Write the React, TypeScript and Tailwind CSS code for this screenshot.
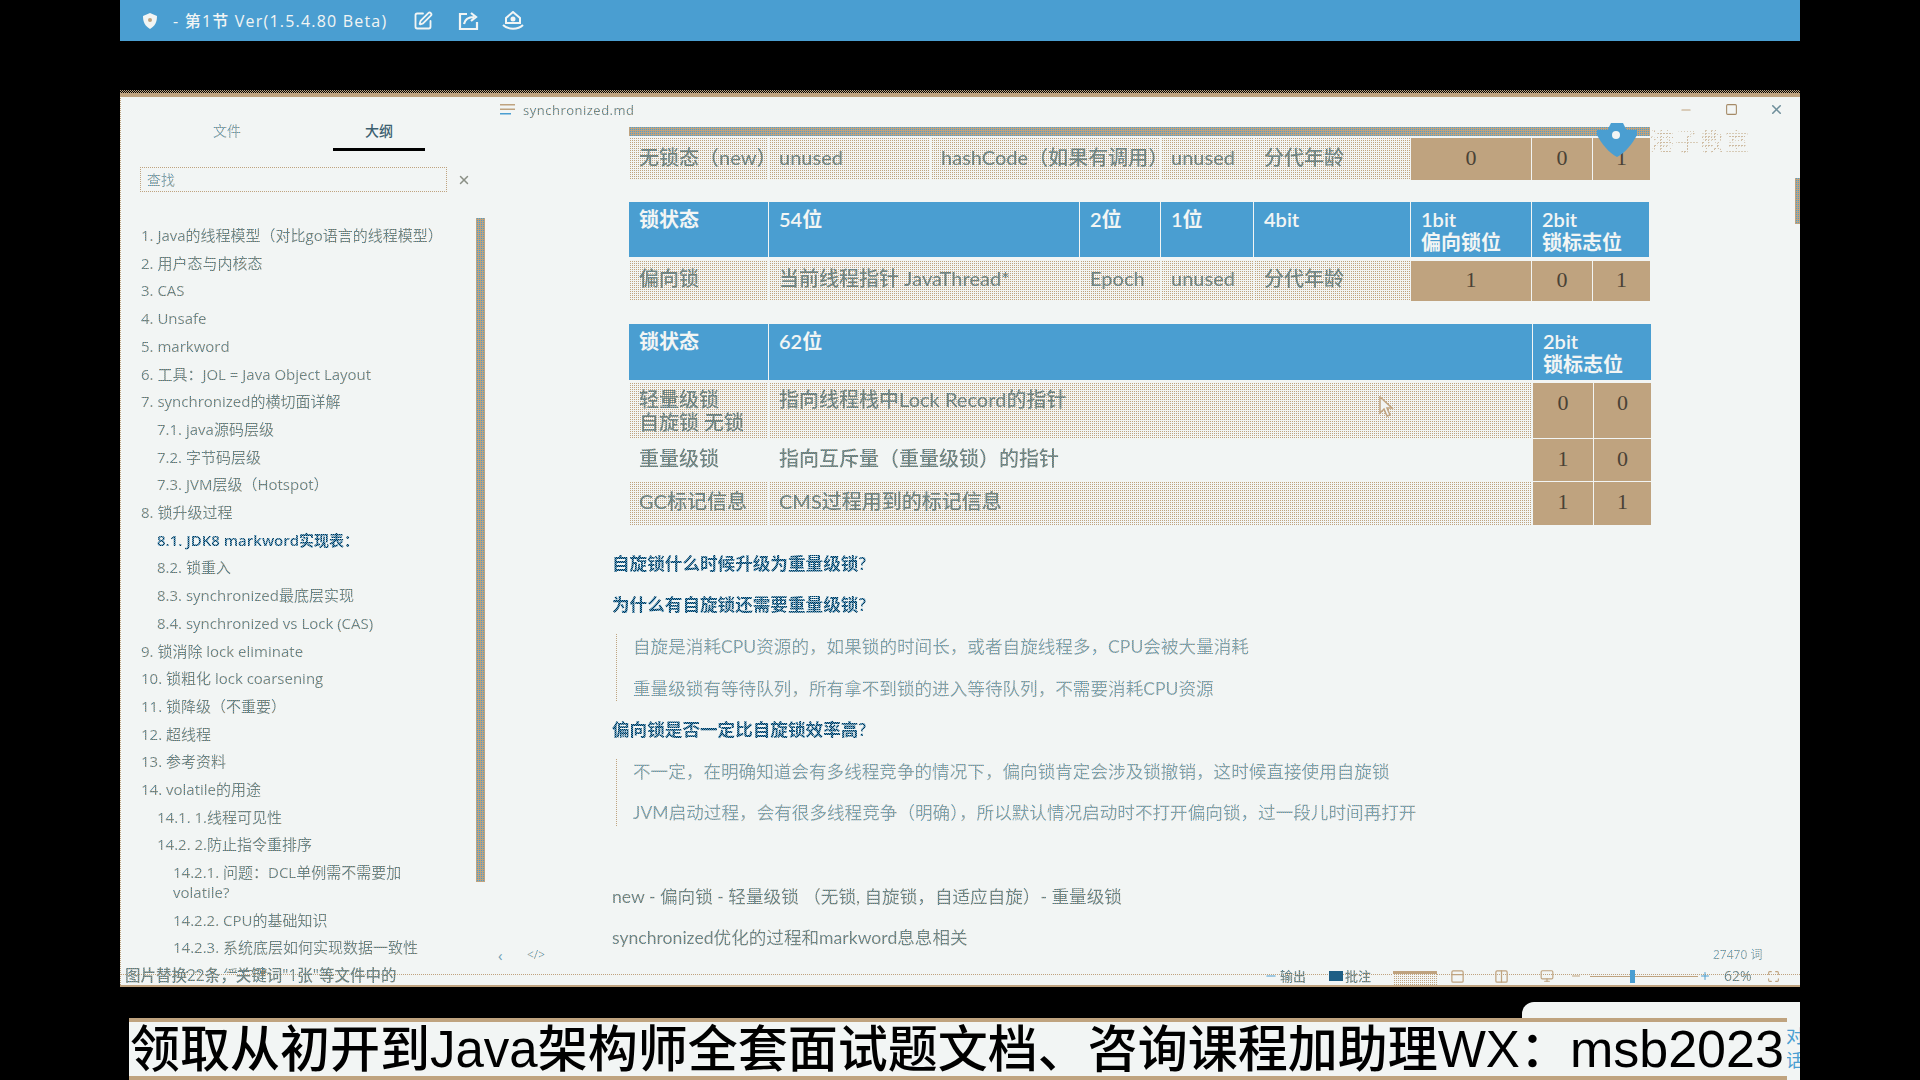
import { Maximize, Minus, Monitor, PanelTop, Plus, Square, SquarePen, X, Columns2 } from "lucide-react";

// dithered text, the reference is a low colour gif
const soft = "bg-[repeating-conic-gradient(#4a9ed1_0_25%,#bfa37f_0_50%)] bg-[length:2px_2px] bg-clip-text text-transparent";
const firm = "bg-[repeating-conic-gradient(#3f7f9f_0_25%,#a58a66_0_50%)] bg-[length:2px_2px] bg-clip-text text-transparent";
const dark = "bg-[repeating-conic-gradient(#0f2f42_0_25%,#4a9ed1_0_50%)] bg-[length:2px_2px] bg-clip-text text-transparent";
const dots = "bg-[conic-gradient(#bfa37f_25%,#f2f5f4_0)] bg-[length:2px_2px]";
const bar = "bg-[conic-gradient(#4a9ed1_25%,#bfa37f_0)] bg-[length:2px_2px]";

const outline: [number, string][] = [
  [0, "1. Java的线程模型（对比go语言的线程模型）"],
  [0, "2. 用户态与内核态"],
  [0, "3. CAS"],
  [0, "4. Unsafe"],
  [0, "5. markword"],
  [0, "6. 工具：JOL = Java Object Layout"],
  [0, "7. synchronized的横切面详解"],
  [1, "7.1. java源码层级"],
  [1, "7.2. 字节码层级"],
  [1, "7.3. JVM层级（Hotspot）"],
  [0, "8. 锁升级过程"],
  [1, "8.1. JDK8 markword实现表："],
  [1, "8.2. 锁重入"],
  [1, "8.3. synchronized最底层实现"],
  [1, "8.4. synchronized vs Lock (CAS)"],
  [0, "9. 锁消除 lock eliminate"],
  [0, "10. 锁粗化 lock coarsening"],
  [0, "11. 锁降级（不重要）"],
  [0, "12. 超线程"],
  [0, "13. 参考资料"],
  [0, "14. volatile的用途"],
  [1, "14.1. 1.线程可见性"],
  [1, "14.2. 2.防止指令重排序"],
  [2, "14.2.1. 问题：DCL单例需不需要加volatile?"],
  [2, "14.2.2. CPU的基础知识"],
  [2, "14.2.3. 系统底层如何实现数据一致性"],
  [2, "14.2.4. 缓存锁"],
];

function Cell({ children, span = "", pt = "pt-[8px]" }: { children?: React.ReactNode; span?: string; pt?: string }) {
  return (
    <div className={`${dots} ${span} ${pt} pl-[10px]`}>
      <span className={`${firm} block w-fit font-medium whitespace-nowrap`}>{children}</span>
    </div>
  );
}

function Plain({ children, pt = "pt-[8px]" }: { children?: React.ReactNode; pt?: string }) {
  return (
    <div className={`${pt} pl-[10px]`}>
      <span className={`${firm} block w-fit font-medium whitespace-nowrap`}>{children}</span>
    </div>
  );
}

function Head({ children, span = "" }: { children?: React.ReactNode; span?: string }) {
  return <div className={`bg-[#4a9ed1] ${span} pl-[10px] pt-[6px] text-[#f2f5f4] font-semibold`}>{children}</div>;
}

function Bit({ children, span = "", pt = "pt-[8px]" }: { children?: React.ReactNode; span?: string; pt?: string }) {
  return (
    <div className={`bg-[#bfa37f] ${span} ${pt} text-center font-['Liberation_Serif',serif] text-[22px] leading-[23px] text-[#4a4236]`}>
      {children}
    </div>
  );
}

function Line({ children, className = "" }: { children?: React.ReactNode; className?: string }) {
  return (
    <div className="flex h-[41.6px] items-center">
      <span className={`${className} font-['Lato','Noto_Sans_CJK_SC',sans-serif] text-[17.6px] leading-[24px] whitespace-nowrap`}>{children}</span>
    </div>
  );
}

function StatusBar() {
  return (
    <div className="relative flex h-[14px] shrink-0 items-center border-b-2 border-[#bfa37f]">
      <div className="absolute left-0 right-0 top-[1px] border-t border-dotted border-[#bfa37f]" />
      <span className={`${firm} relative ml-[5px] -mt-[7px] text-[15.5px] leading-[17px] font-medium whitespace-nowrap`}>
        图片替换22条，关键词"1张"等文件中的
      </span>
      <div className="absolute left-[1144px] top-[-5px] flex h-[16px] items-center gap-[2px]">
        <Minus size={14} className="text-[#4a9ed1]" />
        <span className={`${firm} text-[13px] leading-[15px] font-medium`}>输出</span>
      </div>
      <div className="absolute left-[1209px] top-[-5px] flex h-[16px] items-center gap-[2px]">
        <span className="h-[10px] w-[14px] bg-[#1f5f85]" />
        <span className={`${firm} text-[13px] leading-[15px] font-medium`}>批注</span>
      </div>
      <div className={`${dots} absolute left-[1273px] top-[-2px] h-[14px] w-[44px] border-t-[3px] border-[#bfa37f]`} />
      <PanelTop size={15} className="absolute left-[1330px] top-[-4px] text-[#bfa37f]" />
      <Columns2 size={15} className="absolute left-[1374px] top-[-4px] text-[#bfa37f]" />
      <Monitor size={14} className="absolute left-[1420px] top-[-4px] text-[#bfa37f]" />
      <Minus size={12} className="absolute left-[1450px] top-[-3px] text-[#bfa37f]" />
      <div className="absolute left-[1470px] top-[3px] h-px w-[108px] bg-[#bfa37f]" />
      <div className="absolute left-[1510px] top-[-3px] h-[13px] w-[5px] bg-[#4a9ed1]" />
      <Plus size={12} className="absolute left-[1579px] top-[-3px] text-[#4a9ed1]" />
      <span className={`${firm} absolute left-[1604px] top-[-5px] text-[14px] leading-[15px] font-medium`}>62%</span>
      <Maximize size={13} className="absolute left-[1647px] top-[-3px] text-[#bfa37f]" />
    </div>
  );
}

export default function App() {
  return (
    <div className="relative flex h-[1080px] w-[1920px] flex-col overflow-hidden bg-black px-[120px] font-['Open_Sans','Noto_Sans_CJK_SC',sans-serif]">
      {/* player bar */}
      <div className="flex h-[41px] shrink-0 items-center bg-[#4a9ed1] pl-[21px] text-[#f2f5f4]">
        <svg width="18" height="18" viewBox="0 0 18 18" className="shrink-0">
          <path d="M9 1 L16 4 C16 10 14 14 9 17 C4 14 2 10 2 4 Z" fill="#f2f5f4" />
          <circle cx="9" cy="8" r="2" fill="#bfa37f" />
        </svg>
        <span className="ml-[14px] text-[16px] leading-[20px] tracking-[1.2px] whitespace-nowrap font-medium">- 第1节 Ver(1.5.4.80 Beta)</span>
        <SquarePen size={20} strokeWidth={2.2} className="ml-[26px]" />
        <svg width="21" height="20" viewBox="0 0 21 20" fill="none" stroke="currentColor" strokeWidth="2.2" className="ml-[25px]">
          <path d="M9 3 H2 V18 H19 V11" />
          <path d="M6 13 C7 8 11 6 16 6 M13 2 L18 6 L13 10" />
        </svg>
        <svg width="22" height="20" viewBox="0 0 22 20" fill="none" stroke="currentColor" strokeWidth="2" className="ml-[23px]">
          <path d="M11 1 L18 7 V12 H4 V7 Z" />
          <path d="M1 14 C6 19 16 19 21 14" />
          <circle cx="11" cy="8" r="1.5" fill="currentColor" />
        </svg>
      </div>

      {/* typora window */}
      <div className="relative mt-[49px] flex h-[897px] shrink-0 flex-col bg-[#f2f5f4]">
        <div className="h-[3px] shrink-0 bg-[repeating-conic-gradient(#000_0_25%,#bfa37f_0_50%)] bg-[length:2px_2px]" />
        <div className="h-[4px] shrink-0 bg-[#bfa37f]" />
        <div className="flex min-h-0 flex-1">
          {/* sidebar */}
          <div className="relative flex w-[370px] shrink-0 flex-col overflow-hidden">
            <div className="flex h-[54px] shrink-0 pl-[61px]">
              <div className={`${soft} h-fit w-[92px] pt-[24px] text-center text-[14px] leading-[20px]`}>文件</div>
              <div className="ml-[60px] w-[92px] border-b-[3px] border-[#000] pt-[24px] text-center text-[14px] leading-[20px] font-medium text-[#3d5f70]">大纲</div>
            </div>
            <div className="ml-[20px] mt-[16px] flex items-center">
              <div className="flex h-[25px] w-[307px] items-center border border-dotted border-[#bfa37f] pl-[6px]">
                <span className={`${soft} text-[14px] leading-[18px]`}>查找</span>
              </div>
              <X size={14} strokeWidth={2.5} className="ml-[10px] text-[#8a8f85]" />
            </div>
            <div className="mt-[30px] w-[320px] shrink-0 pl-[21px]">
              {outline.map(([level, title]) => (
                <div
                  key={title}
                  className={`py-[4px] text-[15px] leading-[19.7px] ${level === 1 ? "ml-[16px]" : level === 2 ? "ml-[32px]" : ""} ${
                    title.startsWith("8.1.") ? `${dark} w-fit font-semibold` : `${firm} w-fit`
                  }`}
                >
                  {title}
                </div>
              ))}
            </div>
            <div className={`${bar} absolute left-[356px] top-[121px] h-[664px] w-[9px]`} />
          </div>

          {/* editor */}
          <div className="relative flex min-w-0 flex-1 flex-col overflow-hidden">
            <div className="flex h-[30px] shrink-0 items-center pb-[5px] pl-[10px] pr-[16px]">
              <svg width="15" height="11" viewBox="0 0 15 11" className="shrink-0">
                <rect x="0" y="0" width="15" height="1.5" fill="#bfa37f" />
                <rect x="0" y="4.5" width="15" height="1.5" fill="#bfa37f" />
                <rect x="0" y="9" width="11" height="1.5" fill="#4a9ed1" />
              </svg>
              <span className={`${firm} ml-[8px] text-[13px] leading-[18px] tracking-[0.5px]`}>synchronized.md</span>
              <Minus size={14} className="ml-auto text-[#bfa37f]" />
              <Square size={13} strokeWidth={2} className="ml-[32px] text-[#a58a66]" />
              <X size={15} strokeWidth={2.5} className="ml-[31px] text-[#6f8f9b]" />
            </div>

            <div className="ml-[139px] w-[1021px] font-['Lato','Noto_Sans_CJK_SC',sans-serif] text-[20px] leading-[23px]">
              <div className={`${bar} h-[9px]`} />

              <div className="mt-[2px] grid h-[42px] grid-cols-[139px_161px_229px_92px_156px_120px_60px_57px] gap-x-px">
                <Cell>无锁态（new）</Cell>
                <Cell>unused</Cell>
                <Cell>hashCode（如果有调用）</Cell>
                <Cell>unused</Cell>
                <Cell>分代年龄</Cell>
                <Bit>0</Bit>
                <Bit>0</Bit>
                <Bit>1</Bit>
              </div>

              <div className="mt-[22px] grid h-[55px] grid-cols-[139px_310px_80px_92px_156px_120px_117px] gap-x-px">
                <Head>锁状态</Head>
                <Head>54位</Head>
                <Head>2位</Head>
                <Head>1位</Head>
                <Head>4bit</Head>
                <Head>1bit<br />偏向锁位</Head>
                <Head>2bit<br />锁标志位</Head>
              </div>
              <div className="mt-[4px] grid h-[40px] grid-cols-[139px_310px_80px_92px_156px_120px_60px_57px] gap-x-px">
                <Cell pt="pt-[6px]">偏向锁</Cell>
                <Cell pt="pt-[6px]">当前线程指针 JavaThread*</Cell>
                <Cell pt="pt-[6px]">Epoch</Cell>
                <Cell pt="pt-[6px]">unused</Cell>
                <Cell pt="pt-[6px]">分代年龄</Cell>
                <Bit pt="pt-[7px]">1</Bit>
                <Bit pt="pt-[7px]">0</Bit>
                <Bit pt="pt-[7px]">1</Bit>
              </div>

              <div className="mt-[23px] grid h-[56px] grid-cols-[139px_763px_118px] gap-x-px">
                <Head>锁状态</Head>
                <Head>62位</Head>
                <Head>2bit<br />锁标志位</Head>
              </div>
              <div className="mt-[3px] grid grid-cols-[139px_763px_60px_57px] grid-rows-[55px_42px_43px] gap-x-px gap-y-px">
                <Cell pt="pt-[5px]">轻量级锁<br />自旋锁 无锁</Cell>
                <Cell pt="pt-[5px]">指向线程栈中Lock Record的指针</Cell>
                <Bit pt="pt-[8px]">0</Bit>
                <Bit pt="pt-[8px]">0</Bit>
                <Plain>重量级锁</Plain>
                <Plain>指向互斥量（重量级锁）的指针</Plain>
                <Bit>1</Bit>
                <Bit>0</Bit>
                <Cell>GC标记信息</Cell>
                <Cell>CMS过程用到的标记信息</Cell>
                <Bit>1</Bit>
                <Bit>1</Bit>
              </div>
            </div>

            <div className="ml-[122px] mt-[18px]">
              <Line className={`${dark} font-semibold`}>自旋锁什么时候升级为重量级锁?</Line>
              <Line className={`${dark} font-semibold`}>为什么有自旋锁还需要重量级锁?</Line>
              <div className="relative pl-[21px]">
                <div className="absolute bottom-[8px] left-[4px] top-[8px] border-l border-dotted border-[#bfa37f]" />
                <Line className={soft}>自旋是消耗CPU资源的，如果锁的时间长，或者自旋线程多，CPU会被大量消耗</Line>
                <Line className={soft}>重量级锁有等待队列，所有拿不到锁的进入等待队列，不需要消耗CPU资源</Line>
              </div>
              <Line className={`${dark} font-semibold`}>偏向锁是否一定比自旋锁效率高?</Line>
              <div className="relative pl-[21px]">
                <div className="absolute bottom-[8px] left-[4px] top-[8px] border-l border-dotted border-[#bfa37f]" />
                <Line className={soft}>不一定，在明确知道会有多线程竞争的情况下，偏向锁肯定会涉及锁撤销，这时候直接使用自旋锁</Line>
                <Line className={soft}>JVM启动过程，会有很多线程竞争（明确），所以默认情况启动时不打开偏向锁，过一段儿时间再打开</Line>
              </div>
              <div className="h-[41.6px]" />
              <Line className={firm}>new - 偏向锁 - 轻量级锁 （无锁, 自旋锁，自适应自旋）- 重量级锁</Line>
              <Line className={firm}>synchronized优化的过程和markword息息相关</Line>
            </div>

            {/* source mode toggle and word count */}
            <div className="absolute bottom-[10px] left-[8px] flex items-center text-[#6f9db5]">
              <span className="text-[15px] leading-[16px]">‹</span>
            </div>
            <div className={`${soft} absolute bottom-[10px] left-[37px] text-[12px] leading-[16px]`}>&lt;/&gt;</div>
            <div className={`${soft} absolute bottom-[10px] left-[1223px] text-[12px] leading-[16px]`}>27470 词</div>

            {/* pointer */}
            <svg width="16" height="22" viewBox="0 0 16 22" fill="#f2f5f4" stroke="#bfa37f" strokeWidth="1.5" className="absolute left-[888px] top-[299px]">
              <path d="M2 1 V17 L6 13 L9 20 L12 19 L9 12 L14 12 Z" />
            </svg>

            {/* recording watermark */}
            <svg width="40" height="34" viewBox="0 0 40 34" className="absolute left-[1107px] top-[26px]">
              <path d="M0 7 H40 V12 C36 20 28 30 20 34 C12 30 4 20 0 12 Z" fill="#4a9ed1" />
              <path d="M14 0 H26 L30 8 H10 Z" fill="#4a9ed1" />
              <circle cx="19" cy="12" r="4" fill="#f2f5f4" />
            </svg>
            <div className="absolute left-[1160px] top-[30px] bg-[conic-gradient(#bfa37f_25%,#f2f5f400_0)] bg-[length:3px_3px] bg-clip-text text-[24px] leading-[28px] tracking-[1px] text-transparent opacity-70">港子教室</div>

            {/* editor scrollbar */}
            <div className={`${bar} absolute right-0 top-[81px] h-[46px] w-[5px]`} />
          </div>
        </div>
        <StatusBar />
        {/* window left edge */}
        <div className="absolute bottom-0 left-0 top-0 w-[1px] border-l border-dotted border-[#bfa37f]" />
      </div>

      {/* chat chip behind the caption */}
      <div className="absolute left-[1522px] top-[1002px] flex h-[78px] w-[278px] items-start justify-end overflow-hidden rounded-tl-[12px] bg-[#f2f5f4]">
        <div className="mr-[-4px] mt-[22px] w-[18px] text-[18px] leading-[24px] text-[#4a9ed1]">对话</div>
      </div>

      {/* caption */}
      <div className="relative ml-[9px] mt-[31px] h-[62px] w-[1658px] shrink-0 border-y-4 border-[#bfa37f] bg-[#f2f5f4] pl-[1px] font-['Liberation_Sans','Noto_Sans_CJK_SC',sans-serif] text-[50px] font-medium leading-[54px] whitespace-nowrap text-black">
        领取从初开到<span className="text-[51px]">Java</span>架构师全套面试题文档、咨询课程加助理<span className="text-[51px]">WX</span>：<span className="text-[52px]">msb2023</span>
      </div>
    </div>
  );
}
